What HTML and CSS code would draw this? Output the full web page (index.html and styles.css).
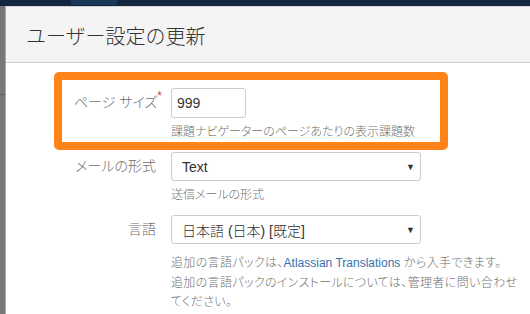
FILE: index.html
```html
<!DOCTYPE html>
<html lang="ja">
<head>
  <meta charset="UTF-8" />
  <meta name="viewport" content="width=device-width, initial-scale=1.0" />
  <title>ユーザー設定の更新</title>
  <link rel="stylesheet" href="styles.css">
</head>
<body>
  <div class="topbar"><span class="nav-active"></span></div>

  <div class="stage">
    <div class="dialog">
      <div class="dialog-header">
        <h2>ユーザー設定の更新</h2>
      </div>

      <form class="dialog-body">
        <div class="highlight">
          <div class="field-group field-group-inset">
            <label for="pageSize">ページ サイズ<span class="required">*</span></label>
            <div class="field">
              <input type="text" id="pageSize" class="text-input" value="999" />
              <div class="description">課題ナビゲーターのページあたりの表示課題数</div>
            </div>
          </div>
        </div>

        <div class="field-group">
          <label>メールの形式</label>
          <div class="field">
            <div class="select"><span>Text</span><span class="arrow">▼</span></div>
            <div class="description">送信メールの形式</div>
          </div>
        </div>

        <div class="field-group">
          <label>言語</label>
          <div class="field">
            <div class="select"><span>日本語 (日本) [既定]</span><span class="arrow">▼</span></div>
            <div class="description description-help">
              追加の言語パックは、<a href="#">Atlassian Translations</a> から入手できます。<br>
              追加の言語パックのインストールについては、管理者に問い合わせ<br>てください。
            </div>
          </div>
        </div>
      </form>
    </div>
  </div>
</body>
</html>
```

FILE: styles.css
```css
body {
  margin: 0;
  font-family: Arial, "Liberation Sans", "Noto Sans CJK JP", sans-serif;
  background-color: #777;
  overflow: hidden;
  height: 314px;
}

.topbar {
  height: 6px;
  background-color: #13263f;
  padding-left: 71px;
}

.nav-active {
  display: block;
  width: 46px;
  height: 5px;
  background-color: #1a3658;
}

.stage {
  padding-left: 5px;
  background: linear-gradient(to bottom, transparent 88px, #5e5e5e 88px, #5e5e5e 89px, transparent 89px);
  height: 308px;
}

.dialog {
  background-color: #fff;
  border-left: 1px solid #a9a9a9;
  border-top: 1px solid #d6d6d6;
  height: 100%;
}

.dialog-header {
  background-color: #f4f4f4;
  border-bottom: 1px solid #cfcfcf;
  padding: 15px 20px 10px;
}

.dialog-header h2 {
  margin: 0;
  font-size: 20px;
  line-height: 30px;
  font-weight: 300;
  color: #333;
}

.dialog-body {
  padding-top: 9px;
}

.highlight {
  width: 378px;
  margin-left: 48px;
  border: 8px solid #fe8418;
  border-radius: 5px;
  padding: 8px 0 0;
  margin-bottom: 2px;
}

.field-group {
  display: grid;
  grid-template-columns: 150px 350px;
  column-gap: 15px;
  margin-bottom: 10px;
}

.field-group-inset {
  grid-template-columns: 94px 260px;
  margin-bottom: 0;
}

.field-group label {
  text-align: right;
  font-size: 14px;
  line-height: 29px;
  font-weight: 300;
  color: #707070;
  font-feature-settings: "palt";
}

.required {
  color: #d04437;
  font-size: 12px;
  vertical-align: top;
  line-height: 16px;
  margin-right: -6px;
}

.text-input {
  box-sizing: border-box;
  width: 75px;
  height: 30px;
  border: 1px solid #ccc;
  border-radius: 3px;
  padding: 0 5px;
  font-family: inherit;
  font-size: 14px;
  color: #333;
  display: block;
}

.select {
  box-sizing: border-box;
  width: 250px;
  height: 29px;
  border: 1px solid #ccc;
  border-radius: 3px;
  padding: 0 5px 0 10px;
  display: flex;
  justify-content: space-between;
  align-items: center;
  font-size: 14px;
  font-weight: 300;
  color: #333;
}

.arrow {
  font-size: 9px;
  color: #333;
}

.description {
  font-size: 12px;
  line-height: 20px;
  font-weight: 300;
  color: #707070;
  margin-top: 4px;
  font-feature-settings: "palt";
}

.description-help {
  margin-top: 10px;
  line-height: 19.5px;
  letter-spacing: 0.35px;
}

.description a {
  color: #3572b0;
  text-decoration: none;
  letter-spacing: normal;
}
```
